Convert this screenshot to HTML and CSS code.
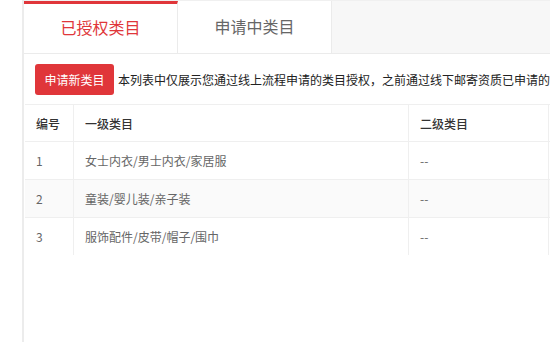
FILE: index.html
```html
<!DOCTYPE HTML>
<html lang="zh-CN">
<head>
    <meta charset="UTF-8">
    <title>类目管理</title>
    <link rel="stylesheet" href="styles.css">
</head>
<body>
<div class="wrap">
    <div class="panel">
        <div class="tabs">
            <div class="tab active">已授权类目</div>
            <div class="tab">申请中类目</div>
        </div>
        <div class="toolbar">
            <button class="btnApply">申请新类目</button>
            <span class="tip">本列表中仅展示您通过线上流程申请的类目授权，之前通过线下邮寄资质已申请的类目</span>
        </div>
        <table class="catTable">
            <thead>
                <tr>
                    <th class="colNum">编号</th>
                    <th class="colFirst">一级类目</th>
                    <th class="colSecond">二级类目</th>
                    <th class="colMore"></th>
                </tr>
            </thead>
            <tbody>
                <tr>
                    <td>1</td>
                    <td>女士内衣/男士内衣/家居服</td>
                    <td>--</td>
                    <td></td>
                </tr>
                <tr class="even">
                    <td>2</td>
                    <td>童装/婴儿装/亲子装</td>
                    <td>--</td>
                    <td></td>
                </tr>
                <tr>
                    <td>3</td>
                    <td>服饰配件/皮带/帽子/围巾</td>
                    <td>--</td>
                    <td></td>
                </tr>
            </tbody>
        </table>
    </div>
</div>
</body>
</html>
```

FILE: styles.css
```css
html,body{
    margin:0;
    padding:0;
    background:#fff;
    overflow:hidden;
}
body{
    font-family:"Noto Sans CJK SC","Liberation Sans",sans-serif;
    font-size:12px;
    color:#333;
}
.wrap{
    height:342px;
    padding-left:22px;
}
.panel{
    width:760px;
    height:342px;
    border-left:2px solid #ececec;
    background:#fff;
}
.tabs{
    display:flex;
    height:52px;
    background:#f7f7f7;
    border-top:1px solid #f0f0f0;
    border-bottom:1px solid #ebebeb;
}
.tab{
    width:154px;
    height:52px;
    line-height:50px;
    text-align:center;
    font-size:16px;
    color:#666;
    background:#fff;
    border-right:1px solid #ebebeb;
    box-sizing:border-box;
}
.tab.active{
    color:#e0363a;
    border-top:3px solid #e0363a;
    line-height:47px;
}
.toolbar{
    display:flex;
    align-items:center;
    height:50px;
    padding-left:10px;
    margin-left:1px;
    white-space:nowrap;
    overflow:hidden;
}
.btnApply{
    width:79px;
    height:31px;
    padding:0;
    border:none;
    border-radius:3px;
    background:#e0363a;
    color:#fff;
    font-family:inherit;
    font-size:12px;
    margin-right:4px;
    flex-shrink:0;
}
.tip{
    color:#222;
    font-size:12px;
}
.catTable{
    border-collapse:collapse;
    margin-left:1px;
    table-layout:fixed;
    width:700px;
    border-top:1px solid #efefef;
}
.catTable th,
.catTable td{
    height:37px;
    padding:0 0 0 11px;
    text-align:left;
    border-right:1px solid #efefef;
    border-bottom:1px solid #efefef;
    font-size:12px;
}
.catTable th{
    font-weight:500;
    color:#333;
    height:36px;
}
.catTable td{
    color:#666;
}
.catTable tbody tr:last-child td{
    border-bottom:none;
}
.catTable tr.even td{
    background:#fafafa;
}
.colNum{
    width:37px;
}
.colFirst{
    width:323px;
}
.colSecond{
    width:128px;
}
```
